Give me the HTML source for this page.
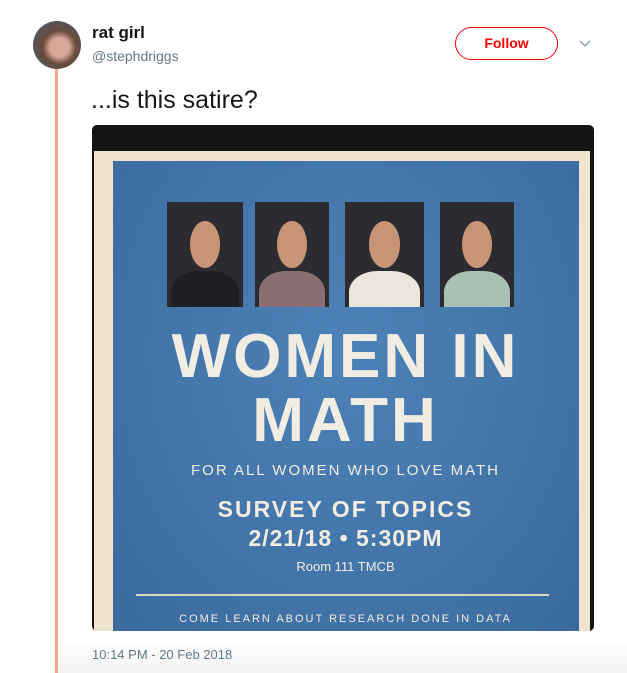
<!DOCTYPE html>
<html><head><style>
body{margin:0;width:627px;height:673px;background:#fff;position:relative;overflow:hidden;font-family:"Liberation Sans",Arial,sans-serif}
.a{position:absolute}
.bot{left:56px;top:640px;width:571px;height:33px;background:linear-gradient(#fff,#f2f2f2)}
.photo{position:absolute;top:202px;height:105px;background:#2b2b30;overflow:hidden}
.photo .f{position:absolute;left:30%;top:18%;width:40%;height:45%;border-radius:50%;background:#c89478}
.photo .b{position:absolute;left:5%;top:66%;width:90%;height:50%;border-radius:40% 40% 0 0}
.pt{text-align:center;color:#f1ede2;position:absolute;left:113px;width:465px;font-weight:bold}
</style></head><body>
<div class="a bot"></div>
<div class="a" style="left:55px;top:68px;width:3px;height:605px;background:#f6a68b"></div>
<div class="a" style="left:33px;top:21px;width:48px;height:48px;border-radius:50%;background:radial-gradient(circle at 55% 55%,#d9a89a 0 25%,#6a4a3c 45%,#4c5a66 80%)"></div>
<div class="a" style="left:92px;top:23px;font-size:17px;font-weight:bold;color:#14171a">rat girl</div>
<div class="a" style="left:92px;top:48px;font-size:14px;color:#657786">@stephdriggs</div>
<div class="a" style="left:455px;top:27px;width:101px;height:31px;border:1px solid #f00;border-radius:17px;color:#f00;font-weight:bold;font-size:14px;text-align:center;line-height:31px">Follow</div>
<svg class="a" style="left:579px;top:40px" width="12" height="8"><path d="M1 1L6 6L11 1" fill="none" stroke="#8899a6" stroke-width="1.3"/></svg>
<div class="a" style="left:91px;top:86px;font-size:25px;color:#14171a">...is this satire?</div>
<div class="a" style="left:92px;top:125px;width:502px;height:506px;border-radius:5px;overflow:hidden;background:#141412">
 <div class="a" style="left:2px;top:26px;width:496px;height:490px;background:#efe4cf"></div>
 <div class="a" style="left:21px;top:36px;width:466px;height:480px;background:radial-gradient(ellipse at 50% 40%,#4d82b8,#3a6a9c)"></div>
</div>
<div class="photo" style="left:167px;width:76px"><div class="f"></div><div class="b" style="background:#1d1f24"></div></div>
<div class="photo" style="left:255px;width:74px"><div class="f"></div><div class="b" style="background:#8a6e74"></div></div>
<div class="photo" style="left:345px;width:79px"><div class="f"></div><div class="b" style="background:#ece6de"></div></div>
<div class="photo" style="left:440px;width:74px"><div class="f"></div><div class="b" style="background:#a9c0b4"></div></div>
<div class="pt" style="top:322px;font-size:62px;letter-spacing:3px;line-height:70px">WOMEN IN</div>
<div class="pt" style="top:388px;font-size:62px;letter-spacing:3px;line-height:66px">MATH</div>
<div class="pt" style="top:462px;font-size:15px;font-weight:normal;letter-spacing:2px">FOR ALL WOMEN WHO LOVE MATH</div>
<div class="pt" style="top:496px;font-size:23px;letter-spacing:2px">SURVEY OF TOPICS</div>
<div class="pt" style="top:525px;font-size:23px;letter-spacing:1px">2/21/18 • 5:30PM</div>
<div class="pt" style="top:559px;font-size:13px;font-weight:normal">Room 111 TMCB</div>
<div class="a" style="left:136px;top:594px;width:413px;height:2px;background:#dcd6c6"></div>
<div class="pt" style="top:613px;font-size:11px;font-weight:normal;letter-spacing:2px">COME LEARN ABOUT RESEARCH DONE IN DATA</div>
<div class="a" style="left:92px;top:647px;font-size:13px;color:#657786">10:14 PM - 20 Feb 2018</div>
</body></html>
